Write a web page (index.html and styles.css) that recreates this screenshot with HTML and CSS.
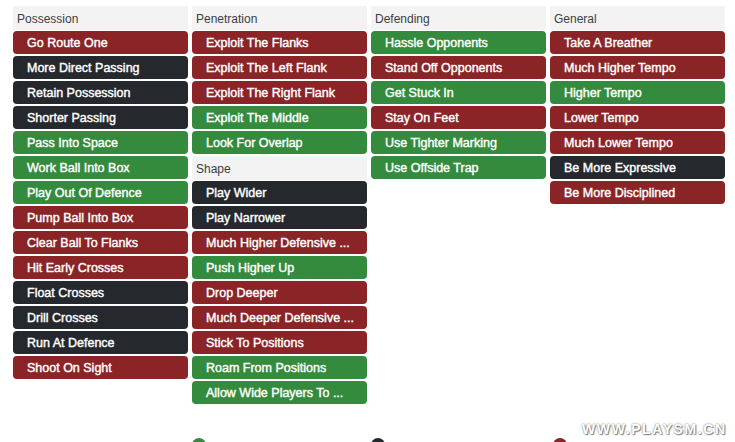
FILE: index.html
```html
<!DOCTYPE html>
<html>
<head>
<meta charset="utf-8">
<link rel="stylesheet" href="styles.css">
</head>
<body>
<div class="page">
  <div class="board">
    <div class="col">
      <div class="head">Possession</div>
      <div class="btn red">Go Route One</div>
      <div class="btn dark">More Direct Passing</div>
      <div class="btn dark">Retain Possession</div>
      <div class="btn dark">Shorter Passing</div>
      <div class="btn green">Pass Into Space</div>
      <div class="btn green">Work Ball Into Box</div>
      <div class="btn green">Play Out Of Defence</div>
      <div class="btn red">Pump Ball Into Box</div>
      <div class="btn red">Clear Ball To Flanks</div>
      <div class="btn red">Hit Early Crosses</div>
      <div class="btn dark">Float Crosses</div>
      <div class="btn dark">Drill Crosses</div>
      <div class="btn dark">Run At Defence</div>
      <div class="btn red">Shoot On Sight</div>
    </div>
    <div class="col">
      <div class="head">Penetration</div>
      <div class="btn red">Exploit The Flanks</div>
      <div class="btn red">Exploit The Left Flank</div>
      <div class="btn red">Exploit The Right Flank</div>
      <div class="btn green">Exploit The Middle</div>
      <div class="btn green">Look For Overlap</div>
      <div class="head">Shape</div>
      <div class="btn dark">Play Wider</div>
      <div class="btn dark">Play Narrower</div>
      <div class="btn red">Much Higher Defensive ...</div>
      <div class="btn green">Push Higher Up</div>
      <div class="btn red">Drop Deeper</div>
      <div class="btn red">Much Deeper Defensive ...</div>
      <div class="btn red">Stick To Positions</div>
      <div class="btn green">Roam From Positions</div>
      <div class="btn green">Allow Wide Players To ...</div>
    </div>
    <div class="col">
      <div class="head">Defending</div>
      <div class="btn green">Hassle Opponents</div>
      <div class="btn red">Stand Off Opponents</div>
      <div class="btn green">Get Stuck In</div>
      <div class="btn red">Stay On Feet</div>
      <div class="btn green">Use Tighter Marking</div>
      <div class="btn green">Use Offside Trap</div>
    </div>
    <div class="col">
      <div class="head">General</div>
      <div class="btn red">Take A Breather</div>
      <div class="btn red">Much Higher Tempo</div>
      <div class="btn green">Higher Tempo</div>
      <div class="btn red">Lower Tempo</div>
      <div class="btn red">Much Lower Tempo</div>
      <div class="btn dark">Be More Expressive</div>
      <div class="btn red">Be More Disciplined</div>
    </div>
  </div>
  <div class="legend">
    <div class="leg-item"></div>
    <div class="leg-item"><span class="dot green"></span></div>
    <div class="leg-item"><span class="dot dark"></span></div>
    <div class="leg-item"><span class="dot red shift"></span></div>
  </div>
  <div class="watermark">WWW.PLAYSM.CN</div>
</div>
</body>
</html>
```
FILE: styles.css
```css
html, body {
  margin: 0;
  padding: 0;
  background: #ffffff;
  overflow: hidden;
}
.page {
  position: relative;
  width: 735px;
  height: 442px;
  overflow: hidden;
  font-family: "Liberation Sans", Arial, Helvetica, sans-serif;
}
.board {
  display: grid;
  grid-template-columns: repeat(4, 175px);
  column-gap: 4px;
  padding: 6px 10px 0 13px;
  align-items: start;
  height: 425px;
  box-sizing: border-box;
}
.col {
  display: flex;
  flex-direction: column;
}
.head {
  height: 24px;
  line-height: 26px;
  margin-bottom: 1px;
  background: #f3f3f4;
  color: #3a3d42;
  font-size: 12px;
  padding-left: 4px;
}
.btn {
  height: 23px;
  line-height: 25px;
  margin-bottom: 2px;
  border-radius: 4px;
  color: #ffffff;
  font-size: 12.5px;
  padding-left: 14px;
  white-space: nowrap;
  overflow: hidden;
  -webkit-text-stroke: 0.4px #ffffff;
}
.red { background: #8a2427; }
.dark { background: #25282d; }
.green { background: #348b3e; }
.legend {
  display: grid;
  grid-template-columns: repeat(4, 175px);
  column-gap: 4px;
  padding: 0 10px 0 13px;
  margin-top: 13px;
}
.leg-item {
  display: flex;
  align-items: center;
  height: 14px;
}
.dot {
  width: 14px;
  height: 14px;
  border-radius: 50%;
  display: inline-block;
  flex: none;
}
.dot.shift { margin-left: 3px; }
.watermark {
  position: absolute;
  left: 582px;
  top: 421px;
  font-size: 14px;
  font-weight: bold;
  letter-spacing: 1.6px;
  color: #ffffff;
  text-shadow: 0 0 2px #666, 1px 1px 1px #888;
  white-space: nowrap;
}
```
